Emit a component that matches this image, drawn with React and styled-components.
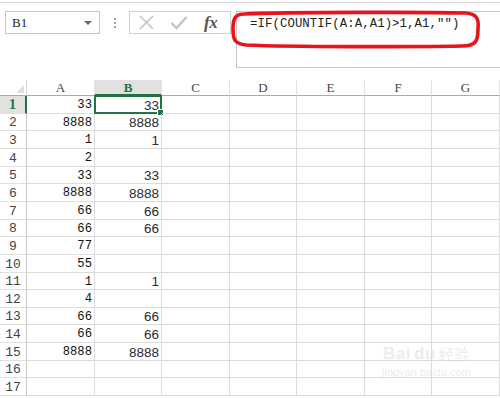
import React from "react";
import styled, { createGlobalStyle } from "styled-components";

const Global = createGlobalStyle`
  html, body { margin: 0; padding: 0; background: #fff; }
  body { overflow: hidden; }
`;

const Page = styled.div`
  position: relative;
  width: 500px;
  height: 398px;
  overflow: hidden;
  background: #fff;
  font-family: "Liberation Sans", Arial, sans-serif;
`;

const TopRule = styled.div`
  margin-top: 2px;
  height: 1px;
  background: #d6d6d6;
`;

const FormulaArea = styled.div`
  display: flex;
  align-items: flex-start;
  height: 67px;
  padding-top: 8px;
  box-sizing: border-box;
  position: relative;
`;

const NameBox = styled.div`
  margin-left: 5px;
  width: 95px;
  height: 23px;
  box-sizing: border-box;
  border: 1px solid #c6c6c6;
  display: flex;
  align-items: center;
  justify-content: space-between;
  padding: 0 7px 0 6px;
  font-family: "Liberation Serif", serif;
  font-size: 13px;
  color: #222;
`;

const Caret = styled.span`
  width: 0;
  height: 0;
  border-left: 4px solid transparent;
  border-right: 4px solid transparent;
  border-top: 4px solid #666;
`;

const Dots = styled.div`
  width: 29px;
  height: 23px;
  display: flex;
  flex-direction: column;
  align-items: center;
  justify-content: center;
  gap: 2px;
  & > span {
    width: 2px;
    height: 2px;
    background: #a0a0a0;
  }
`;

const IconBox = styled.div`
  width: 102px;
  height: 23px;
  box-sizing: border-box;
  border: 1px solid #d0d0d0;
  display: flex;
  align-items: center;
  padding-left: 8px;
  gap: 15px;
`;

const Fx = styled.span`
  font-family: "Liberation Serif", serif;
  font-style: italic;
  font-weight: bold;
  font-size: 17px;
  color: #555;
  margin-left: 1px;
  letter-spacing: -0.5px;
`;

const FormulaBar = styled.div`
  margin-left: 5px;
  flex: 1;
  height: 57px;
  box-sizing: border-box;
  border: 1px solid #c6c6c6;
  border-right: none;
  padding: 5px 0 0 13px;
  font-family: "Liberation Mono", monospace;
  font-size: 12.3px;
  color: #222;
  letter-spacing: 0.1px;
`;

const Highlight = styled.svg`
  position: absolute;
  left: 230px;
  top: 8px;
  width: 252px;
  height: 38px;
  overflow: visible;
`;

const Grid = styled.div`
  margin-top: 10px;
  display: grid;
  grid-template-columns: 27px 68px 67px 68px 67px 68px 67px 68px;
`;

const Corner = styled.div`
  height: 16px;
  box-sizing: border-box;
  border-right: 1px solid #d6d6d6;
  border-bottom: 1px solid #ababab;
  position: relative;
  &::after {
    content: "";
    position: absolute;
    right: 2px;
    bottom: 2px;
    width: 0;
    height: 0;
    border-left: 8px solid transparent;
    border-bottom: 8px solid #dfdfdf;
  }
`;

const ColHead = styled.div`
  height: 16px;
  box-sizing: border-box;
  border-right: 1px solid #e2e2e2;
  border-bottom: ${(p) => (p.$active ? "2px solid #217346" : "1px solid #ababab")};
  background: ${(p) => (p.$active ? "#e1e1e1" : "#fff")};
  color: ${(p) => (p.$active ? "#217346" : "#444")};
  font-weight: ${(p) => (p.$active ? "bold" : "normal")};
  font-family: "Liberation Serif", serif;
  font-size: 13px;
  display: flex;
  align-items: center;
  justify-content: center;
  padding-top: ${(p) => (p.$active ? "1px" : "0")};
`;

const RowHead = styled.div`
  box-sizing: border-box;
  border-right: ${(p) => (p.$active ? "2px solid #217346" : "1px solid #c6c6c6")};
  border-bottom: 1px solid #e0e0e0;
  background: ${(p) => (p.$active ? "#e1e1e1" : "#fff")};
  color: ${(p) => (p.$active ? "#217346" : "#444")};
  font-weight: ${(p) => (p.$active ? "bold" : "normal")};
  font-family: ${(p) => (p.$active ? '"Liberation Serif", serif' : '"Liberation Mono", monospace')};
  font-size: ${(p) => (p.$active ? "14px" : "13px")};
  display: flex;
  align-items: center;
  justify-content: center;
  padding-top: 1px;
`;

const Cell = styled.div`
  position: relative;
  box-sizing: border-box;
  border-right: 1px solid #dcdcdc;
  border-bottom: 1px solid #dcdcdc;
  display: flex;
  align-items: center;
  justify-content: flex-end;
  padding: 1px 2px 0 0;
  font-family: ${(p) => (p.$mono ? '"Liberation Mono", monospace' : '"Liberation Sans", Arial, sans-serif')};
  font-size: ${(p) => (p.$mono ? "12.2px" : "13.5px")};
  color: ${(p) => (p.$mono ? "#111" : "#2a2a3a")};
`;

const Selection = styled.div`
  position: absolute;
  left: -1px;
  top: -1px;
  right: -1px;
  bottom: -1px;
  border: 2px solid #217346;
  pointer-events: none;
  &::after {
    content: "";
    position: absolute;
    right: -4px;
    bottom: -4px;
    width: 5px;
    height: 5px;
    background: #217346;
    border: 1px solid #fff;
  }
`;

const Watermark = styled.div`
  position: absolute;
  left: 382px;
  top: 343px;
  display: flex;
  flex-direction: column;
  align-items: center;
  color: rgba(205, 205, 205, 0.4);
  font-family: "Liberation Sans", Arial, sans-serif;
  pointer-events: none;
`;

const WmTitle = styled.div`
  font-size: 17px;
  font-weight: bold;
  letter-spacing: 0.5px;
  display: flex;
  align-items: center;
  gap: 3px;
  & > span:last-child {
    font-family: "Noto Sans CJK SC", sans-serif;
    font-size: 15px;
    font-weight: normal;
  }
`;

const WmSub = styled.div`
  font-size: 11px;
  margin-top: 2px;
`;

const colA = ["33", "8888", "1", "2", "33", "8888", "66", "66", "77", "55", "1", "4", "66", "66", "8888", "", ""];
const colB = ["33", "8888", "1", "", "33", "8888", "66", "66", "", "", "1", "", "66", "66", "8888", "", ""];
const cols = ["A", "B", "C", "D", "E", "F", "G"];

const ROW = 17.65;
const rowHeight = (i) => Math.round((i + 1) * ROW) - Math.round(i * ROW);

export default function App() {
  return (
    <Page>
      <Global />
      <TopRule />
      <FormulaArea>
        <NameBox>
          <span>B1</span>
          <Caret />
        </NameBox>
        <Dots>
          <span />
          <span />
          <span />
        </Dots>
        <IconBox>
          <svg width="17" height="17" viewBox="0 0 17 17">
            <path d="M2 2 L15 15 M15 2 L2 15" stroke="#c4c4c4" strokeWidth="1.6" fill="none" />
          </svg>
          <svg width="18" height="17" viewBox="0 0 18 17">
            <path d="M1.5 9 L6.5 14 L16.5 3" stroke="#c4c4c4" strokeWidth="2.4" fill="none" />
          </svg>
          <Fx>fx</Fx>
        </IconBox>
        <FormulaBar>=IF(COUNTIF(A:A,A1)&gt;1,A1,"")</FormulaBar>
        <Highlight viewBox="0 0 252 38">
          <path
            d="M14 3 C60 1 200 1 236 2 C247 3 249 8 248 18 C248 30 246 35 232 35 C180 36 60 36 16 34 C5 33 3 29 3 18 C3 8 5 3 14 3 Z"
            stroke="#e8141c"
            strokeWidth="3.6"
            fill="none"
          />
        </Highlight>
      </FormulaArea>
      <Grid>
        <Corner />
        {cols.map((c) => (
          <ColHead key={c} $active={c === "B"}>
            {c}
          </ColHead>
        ))}
        {colA.map((a, i) => {
          const h = rowHeight(i);
          return (
            <React.Fragment key={i}>
              <RowHead $active={i === 0} style={{ height: h }}>
                {i + 1}
              </RowHead>
              <Cell $mono style={{ height: h }}>{a}</Cell>
              <Cell style={{ height: h }}>
                {colB[i]}
                {i === 0 && <Selection />}
              </Cell>
              {[0, 1, 2, 3, 4].map((k) => (
                <Cell key={k} style={{ height: h }} />
              ))}
            </React.Fragment>
          );
        })}
      </Grid>
      <Watermark>
        <WmTitle>
          <span>Bai</span>
          <span>du</span>
          <span>经验</span>
        </WmTitle>
        <WmSub>jingyan.baidu.com</WmSub>
      </Watermark>
    </Page>
  );
}
